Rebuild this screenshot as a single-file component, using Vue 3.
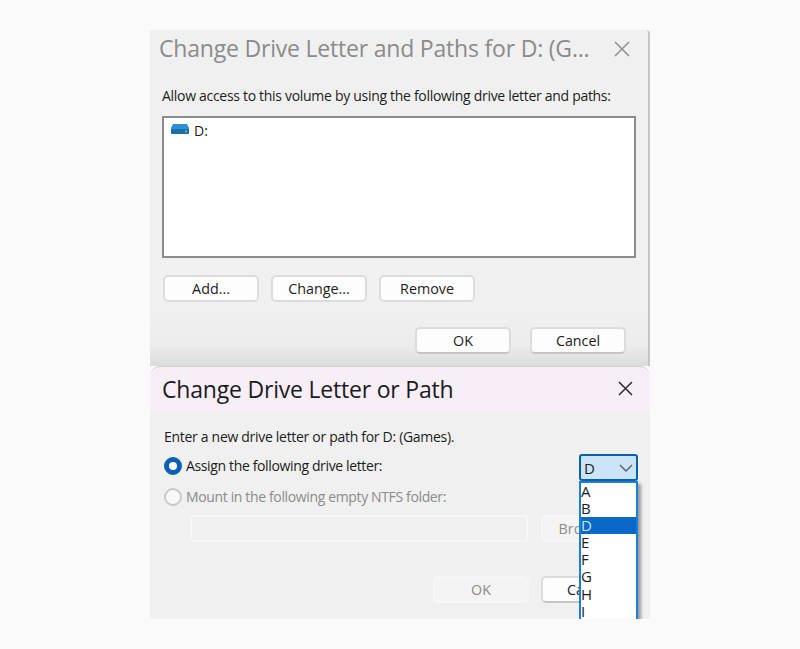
<template>
  <main class="page">
    <section class="dialog first">
      <header class="head">
        <h1 class="title muted">Change Drive Letter and Paths for D: (G...</h1>
        <svg class="close" width="16" height="16" viewBox="0 0 16 16"><path d="M1 1l14 14M15 1L1 15" stroke="#8f8f8f" stroke-width="1.5" fill="none" /></svg>
      </header>
      <p class="intro">Allow access to this volume by using the following drive letter and paths:</p>
      <div class="listbox">
        <div class="drive">
          <svg class="disk" width="18" height="10" viewBox="0 0 18 10">
            <path d="M2 0h14l2 4v5a1 1 0 0 1-1 1H1a1 1 0 0 1-1-1V4z" fill="#2f8fd0" />
            <rect x="0" y="5" width="18" height="5" rx="1" fill="#1a6fa8" />
            <rect x="14" y="6.5" width="2" height="2" fill="#4fd08a" />
          </svg>
          <span>D:</span>
        </div>
      </div>
      <div class="actions">
        <button class="btn">Add...</button>
        <button class="btn">Change...</button>
        <button class="btn">Remove</button>
      </div>
      <div class="confirm">
        <button class="btn raised">OK</button>
        <button class="btn raised">Cancel</button>
      </div>
    </section>

    <section class="dialog second">
      <header class="pink">
        <h2 class="title">Change Drive Letter or Path</h2>
        <svg width="15" height="15" viewBox="0 0 15 15"><path d="M1 1l13 13M14 1L1 14" stroke="#2b2b2b" stroke-width="1.5" fill="none" /></svg>
      </header>
      <div class="body">
        <p class="enter">Enter a new drive letter or path for D: (Games).</p>
        <div class="row assign">
          <span class="radio on"></span>
          <span class="label">Assign the following drive letter:</span>
          <div class="combo">
            <span>D</span>
            <svg width="14" height="8" viewBox="0 0 14 8"><path d="M1 1l6 6 6-6" stroke="#5c6670" stroke-width="1.5" fill="none" /></svg>
          </div>
        </div>
        <div class="row mount">
          <span class="radio"></span>
          <span class="label off">Mount in the following empty NTFS folder:</span>
        </div>
        <div class="row folder">
          <div class="field"></div>
          <button class="btn disabled browse">Browse...</button>
        </div>
        <div class="row last">
          <button class="btn disabled ok">OK</button>
          <button class="btn raised cancel">Cancel</button>
        </div>
        <ul class="menu">
          <li v-for="l in letters" :key="l" :class="{ sel: l === 'D' }">{{ l }}</li>
        </ul>
      </div>
    </section>
  </main>
</template>

<script setup>
const letters = ['A', 'B', 'D', 'E', 'F', 'G', 'H', 'I']
</script>

<style>
html, body { margin: 0; background: #fafafa; }
</style>

<style scoped>
.page {
  width: 800px;
  height: 649px;
  padding: 30px 0 0 150px;
  box-sizing: border-box;
  overflow: hidden;
  font-family: "Open Sans", "Noto Sans", sans-serif;
  color: #1c1c1c;
  background: #fafafa;
}
.dialog { width: 500px; box-sizing: border-box; }
.first {
  height: 336px;
  border-right: 2px solid #c4c4c4;
  border-radius: 0 4px 0 0;
  background: linear-gradient(#f0f0f0 280px, #ececec 315px, #dcdcdc 336px);
  padding: 0 0 0 12px;
}
.head { height: 39px; display: flex; align-items: center; justify-content: space-between; padding: 0 18px 0 0; margin-left: -3px; }
.title { margin: 0; font-size: 23px; line-height: 32px; font-weight: 400; white-space: nowrap; letter-spacing: -0.2px; }
.head .title { margin-top: -3px; }
.muted { color: #8b8b8b; }
.close { margin-top: -2px; }
.intro { margin: 17px 0 0; font-size: 14px; line-height: 20px; white-space: nowrap; letter-spacing: -0.3px; }
.listbox {
  width: 474px;
  height: 142px;
  margin-top: 10px;
  box-sizing: border-box;
  background: #fff;
  border: 2px solid #8c8c8c;
  padding: 4px 7px;
}
.drive { display: flex; align-items: center; gap: 5px; font-size: 14px; line-height: 18px; }
.disk { margin-bottom: 4px; }
.actions { display: flex; gap: 12px; margin: 17px 0 0 1px; }
.confirm { display: flex; gap: 19px; margin: 25px 0 0 253px; }
.btn {
  width: 96px;
  height: 27px;
  padding: 0;
  box-sizing: border-box;
  font: inherit;
  font-size: 14.3px;
  color: #1c1c1c;
  background: #fdfdfd;
  border: 2px solid #dcdcdc;
  border-radius: 5px;
  white-space: nowrap;
  flex: none;
}
.raised { border-bottom-color: #c4c4c4; }
.second { height: 253px; }
.pink {
  height: 46px;
  background: #f7eef8;
  border-radius: 10px 10px 0 0;
  border-top: 1px solid #d0d0d0;
  box-sizing: border-box;
  display: flex;
  align-items: center;
  justify-content: space-between;
  padding: 0 17px 2px 12px;
}
.body { position: relative; padding: 15px 0 0 14px; height: 207px; box-sizing: border-box; background: #f0f0f0; overflow: hidden; }
.enter { margin: 0; font-size: 14px; line-height: 20px; letter-spacing: -0.3px; white-space: nowrap; }
.row { display: flex; align-items: center; }
.assign { margin-top: 6px; height: 26px; }
.radio {
  width: 18px;
  height: 18px;
  box-sizing: border-box;
  border: 2px solid #c8c8c8;
  border-radius: 50%;
  background: #f8f8f8;
  flex: none;
}
.radio.on { border: 5px solid #0b5fb5; background: #fff; }
.label { margin-left: 4px; font-size: 14px; line-height: 20px; letter-spacing: -0.36px; white-space: nowrap; }
.off { color: #8b8b8b; }
.combo {
  position: absolute;
  left: 429px;
  top: 42px;
  width: 59px;
  height: 27px;
  box-sizing: border-box;
  background: #cce4f7;
  border: 2px solid #0a5fa8;
  border-radius: 3px;
  display: flex;
  align-items: center;
  justify-content: space-between;
  padding: 0 3px 0 3px;
  font-size: 15px;
}
.mount { margin-top: 5px; height: 26px; }
.folder { margin: 5px 0 0 26px; gap: 13px; }
.field { width: 338px; height: 27px; box-sizing: border-box; border: 2px solid #f6f6f6; border-radius: 3px; }
.disabled { background: #f4f4f4; border-color: #f6f6f6; color: #8b8b8b; }
.last { margin: 34px 0 0 269px; gap: 12px; }
.menu {
  position: absolute;
  left: 429px;
  top: 69px;
  width: 59px;
  height: 160px;
  margin: 0;
  padding: 0;
  box-sizing: border-box;
  list-style: none;
  background: #fff;
  border: 2px solid #1a7fd8;
  box-shadow: 3px 3px 3px #9a9a9a;
  font-size: 15px;
  line-height: 17.1px;
}
.menu li { padding-left: 0; }
.menu .sel { background: #0a68c8; color: #cfe4f7; }
</style>
